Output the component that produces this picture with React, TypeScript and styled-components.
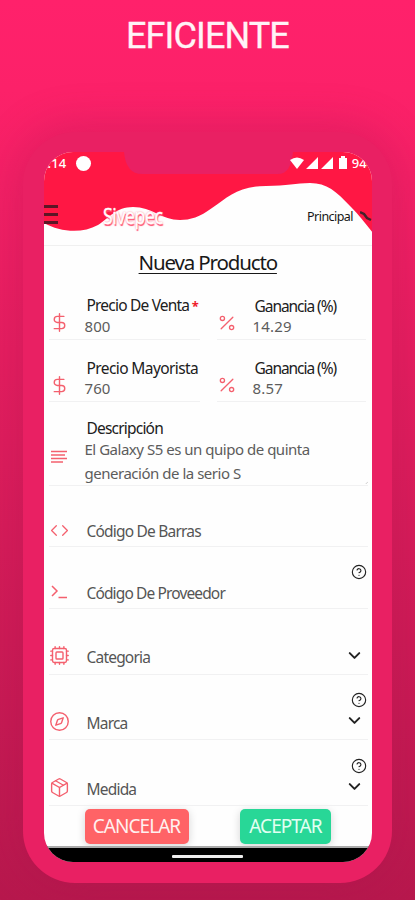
import React from "react";
import styled, { createGlobalStyle } from "styled-components";
import { Code, Cpu, Compass, Package, ChevronDown, DollarSign, Percent, CircleHelp } from "lucide-react";

const Global = createGlobalStyle`
  * { box-sizing: border-box; }
  body { margin: 0; background: #c81a55; }
`;
const Page = styled.main`
  width: 415px; height: 900px; overflow: hidden;
  display: flex; flex-direction: column; align-items: center;
  background: linear-gradient(180deg, #ff216b 0%, #fc2169 10%, #b7184d 100%);
  font-family: Roboto, sans-serif;
`;
const Heading = styled.h1`
  margin: 0; height: 132px; padding-top: 15px; flex: none;
  font-weight: 400; font-size: 36px; line-height: 42px; letter-spacing: -0.9px; color: #fff3f7;
  -webkit-text-stroke: 0.3px #fff3f7;
`;
const Phone = styled.section`
  width: 369px; height: 751px; flex: none; padding: 20px 20px 21px 20.5px;
  border-radius: 52px; background: #e92063;
  box-shadow: 0 0 44px 4px rgba(165, 20, 75, 0.3);
`;
const Screen = styled.div`
  position: relative; height: 710px; overflow: hidden; border-radius: 29px;
  background: #fefefe; display: flex; flex-direction: column;
`;
const Wave = styled.svg`position: absolute; left: 0; top: 0; width: 329px; height: 84px;`;
const StatusBar = styled.div`
  position: relative; height: 22px; flex: none; display: flex; align-items: center;
  padding: 0 5px 0 4px; color: #fff;
`;
const StatusText = styled.span`font: 500 13px/22px "Noto Sans", sans-serif; letter-spacing: 0.2px;`;
const Dot = styled.i`width: 15px; height: 15px; border-radius: 50%; background: #fff; margin-left: 9px;`;
const StatusIcons = styled.svg`width: 62px; height: 16px; margin-left: auto;`;
const NavBar = styled.header`
  position: relative; height: 72px; flex: none; display: flex; padding-top: 31px;
  border-bottom: 1px solid #f0f0f0;
`;
const Burger = styled.div`
  width: 15px; height: 19px; display: flex; flex-direction: column; justify-content: space-between;
  i { height: 3px; background: #5c1626; }
`;
const Logo = styled.div`
  margin: -2px 0 0 45px; width: 150px; font-size: 21px; line-height: 26px; letter-spacing: -0.4px;
  font-family: "Open Sans", sans-serif; color: #fff; text-shadow: 1px 2px 1px #ff4c6e, 0 0 2px #ff5575;
  -webkit-text-stroke: 0.4px #fff;
  span { display: inline-block; transform: scaleX(0.84); transform-origin: 0 0; }
`;
const Branch = styled.div`
  margin-left: 56px; margin-top: 2px; font: 12.5px/20px "Noto Sans", sans-serif; letter-spacing: -0.55px;
  color: #151515; display: flex; gap: 7px;
  svg { margin-top: 3px; }
`;
const Title = styled.h2`
  margin: 3px 0 0; height: 28px; flex: none; text-align: center; text-decoration: underline;
  text-underline-offset: 3px; text-decoration-thickness: 1px;
  font: 400 20.5px/27px "Noto Sans", sans-serif; letter-spacing: -1.15px; color: #181818;
`;
const Pair = styled.div`display: flex; gap: 17px; flex: none; padding-left: 5px;`;
const Field = styled.div<{ $h: number; $w?: number }>`
  position: relative; flex: none; height: ${p => p.$h}px; width: ${p => p.$w ?? 319}px;
  margin-left: ${p => (p.$w ? 0 : 5)}px;
  border-bottom: 1px solid #f1f1f2; display: flex; align-items: flex-end;
`;
const IconBox = styled.span<{ $b: number }>`
  width: 21px; height: 20px; flex: none; margin-bottom: ${p => p.$b}px; color: #f4606e;
  display: flex; align-items: center; justify-content: center;
`;
const Texts = styled.div<{ $b: number }>`
  margin: 0 0 ${p => p.$b}px 15px; white-space: nowrap;
`;
const Label = styled.div<{ $ls?: number; $soft?: boolean; $tight?: boolean }>`
  font: 15.5px/21px "Noto Sans", sans-serif; letter-spacing: ${p => p.$ls ?? -0.8}px;
  padding-left: 2px; color: ${p => (p.$soft ? "#555" : "#202020")};
  margin-bottom: ${p => (p.$tight ? -2 : 0)}px;
  b { color: #ef1c2c; font-size: 13px; }
`;
const Value = styled.div<{ $ls?: number; $lh?: number }>`
  font: 15px/${p => p.$lh ?? 22}px "Noto Sans", sans-serif; letter-spacing: ${p => p.$ls ?? 0}px; color: #5c5c5c;
`;
const Tools = styled.div`
  margin-left: auto; width: 28px; align-self: flex-end; height: 100%;
  display: flex; flex-direction: column; justify-content: flex-end; color: #222; padding-bottom: 9px;
`;
const Help = styled(CircleHelp)<{ $gap: number }>`margin: 0 0 ${p => p.$gap}px 11px; flex: none;`;
const Chevron = styled(ChevronDown)`margin-left: 5px; flex: none;`;
const Actions = styled.div`
  height: 40px; flex: none; display: flex; padding: 3px 41px 0 41px; justify-content: space-between;
`;
const Button = styled.button<{ $green?: boolean }>`
  height: 35px; width: ${p => (p.$green ? 91 : 104)}px; padding: 0; border: 0; border-radius: 5px; white-space: nowrap;
  background: ${p => (p.$green ? "#28d797" : "#ff6366")}; color: ${p => (p.$green ? "#e2fff2" : "#fff0ef")};
  font: 400 19px/35px "Noto Sans", sans-serif; letter-spacing: -0.95px;
  box-shadow: 0 2px 9px rgba(0, 0, 0, 0.17);
`;
const HomeBar = styled.div`
  flex: 1; background: #000; border-top: 2px solid #aaa; display: flex; justify-content: center; padding-top: 7px;
  i { width: 71px; height: 3px; border-radius: 1px; background: #eee; }
`;
const Resize = styled.svg`margin: 0 0 1px auto; width: 3px; height: 3px;`;

const LinesIcon = () => (
  <svg width="18" height="16" viewBox="0 0 18 16" stroke="currentColor" strokeWidth="1.5">
    <path d="M1 2.5H17M1 6H15M1 9.5H17M1 13H13" />
  </svg>
);
const PromptIcon = () => (
  <svg width="18" height="16" viewBox="0 0 18 16" fill="none" stroke="currentColor" strokeWidth="1.5">
    <path d="M2 2L7 7L2 12M8.5 13.5H17" />
  </svg>
);

interface PriceProps { label: string; value: string; kind: "money" | "rate"; required?: boolean; tracking?: number }

function PriceField({ label, value, kind, required, tracking }: PriceProps) {
  const money = kind === "money";
  const Icon = money ? DollarSign : Percent;
  return (
    <Field $h={62.5} $w={money ? 151 : 149}>
      <IconBox $b={6}><Icon size={money ? 21 : 20} strokeWidth={1.6} /></IconBox>
      <Texts $b={2}>
        <Label $ls={tracking} $tight>{label}{required && <b> *</b>}</Label>
        <Value $ls={money ? 0.1 : 0.2}>{value}</Value>
      </Texts>
    </Field>
  );
}

export default function App() {
  return (
    <Page>
      <Global />
      <Heading>EFICIENTE</Heading>
      <Phone>
        <Screen>
          <Wave viewBox="0 0 329 84">
            <path fill="#ff1744" d="M0 0H329V81C321 71 315 63 307 55C292 39 283 31 266 31C252 31 243 34 222 34C195 34 184 45 168 56C156 65 146 68 136 68C118 68 108 55 89 55C72 55 65 66 54 73C38 82 16 80 0 71Z" />
            <path fill="#e92063" d="M80 0Q82 22 98 22H234Q247 22 249 0Z" />
          </Wave>
          <StatusBar>
            <StatusText>.14</StatusText><Dot />
            <StatusIcons viewBox="0 0 62 16" fill="#fff">
              <path d="M0 5Q7 0 14 5L7 14Z" /><path d="M16 14L28 2V14ZM31 14L43 2V14Z" />
              <path d="M51 3V1H55V3H57V14H49V3Z" />
            </StatusIcons>
            <StatusText>94</StatusText>
          </StatusBar>
          <NavBar>
            <Burger><i /><i /><i /></Burger>
            <Logo><span>Sivepec</span></Logo>
            <Branch>Principal <svg width="12" height="12" viewBox="0 0 12 12"><path d="M0 2L4 4L7 8L11 10" fill="none" stroke="#44202a" strokeWidth="2.5" /></svg></Branch>
          </NavBar>
          <Title>Nueva Producto</Title>
          <Pair>
            <PriceField label="Precio De Venta" value="800" kind="money" required />
            <PriceField label="Ganancia (%)" value="14.29" kind="rate" tracking={-1.05} />
          </Pair>
          <Pair>
            <PriceField label="Precio Mayorista" value="760" kind="money" tracking={-0.6} />
            <PriceField label="Ganancia (%)" value="8.57" kind="rate" tracking={-1.05} />
          </Pair>
          <Field $h={84}>
            <IconBox $b={18}><LinesIcon /></IconBox>
            <Texts $b={0}>
              <Label $tight>Descripción</Label>
              <Value $lh={24} $ls={-0.48}>El Galaxy S5 es un quipo de quinta<br />generación de la serio S</Value>
            </Texts>
            <Resize viewBox="0 0 4 4"><path d="M1 4L4 1" stroke="#bbb" /></Resize>
          </Field>
          <Field $h={61}><IconBox $b={6}><Code size={19} strokeWidth={1.6} /></IconBox><Texts $b={4}><Label $soft>Código De Barras</Label></Texts></Field>
          <Field $h={62}>
            <IconBox $b={6}><PromptIcon /></IconBox><Texts $b={4}><Label $soft $ls={-0.87}>Código De Proveedor</Label></Texts>
            <Tools><Help size={16} strokeWidth={1.7} $gap={19} /></Tools>
          </Field>
          <Field $h={66}>
            <IconBox $b={9}><Cpu size={21} strokeWidth={1.6} /></IconBox><Texts $b={6}><Label $soft $ls={-0.8}>Categoria</Label></Texts>
            <Tools><Chevron size={19} strokeWidth={2.5} /></Tools>
          </Field>
          <Field $h={65}>
            <IconBox $b={8}><Compass size={21} strokeWidth={1.6} /></IconBox><Texts $b={5}><Label $soft>Marca</Label></Texts>
            <Tools><Help size={16} strokeWidth={1.7} $gap={3} /><Chevron size={19} strokeWidth={2.5} /></Tools>
          </Field>
          <Field $h={66}>
            <IconBox $b={8}><Package size={21} strokeWidth={1.6} /></IconBox><Texts $b={5}><Label $soft>Medida</Label></Texts>
            <Tools><Help size={16} strokeWidth={1.7} $gap={3} /><Chevron size={19} strokeWidth={2.5} /></Tools>
          </Field>
          <Actions><Button>CANCELAR</Button><Button $green>ACEPTAR</Button></Actions>
          <HomeBar><i /></HomeBar>
        </Screen>
      </Phone>
    </Page>
  );
}
